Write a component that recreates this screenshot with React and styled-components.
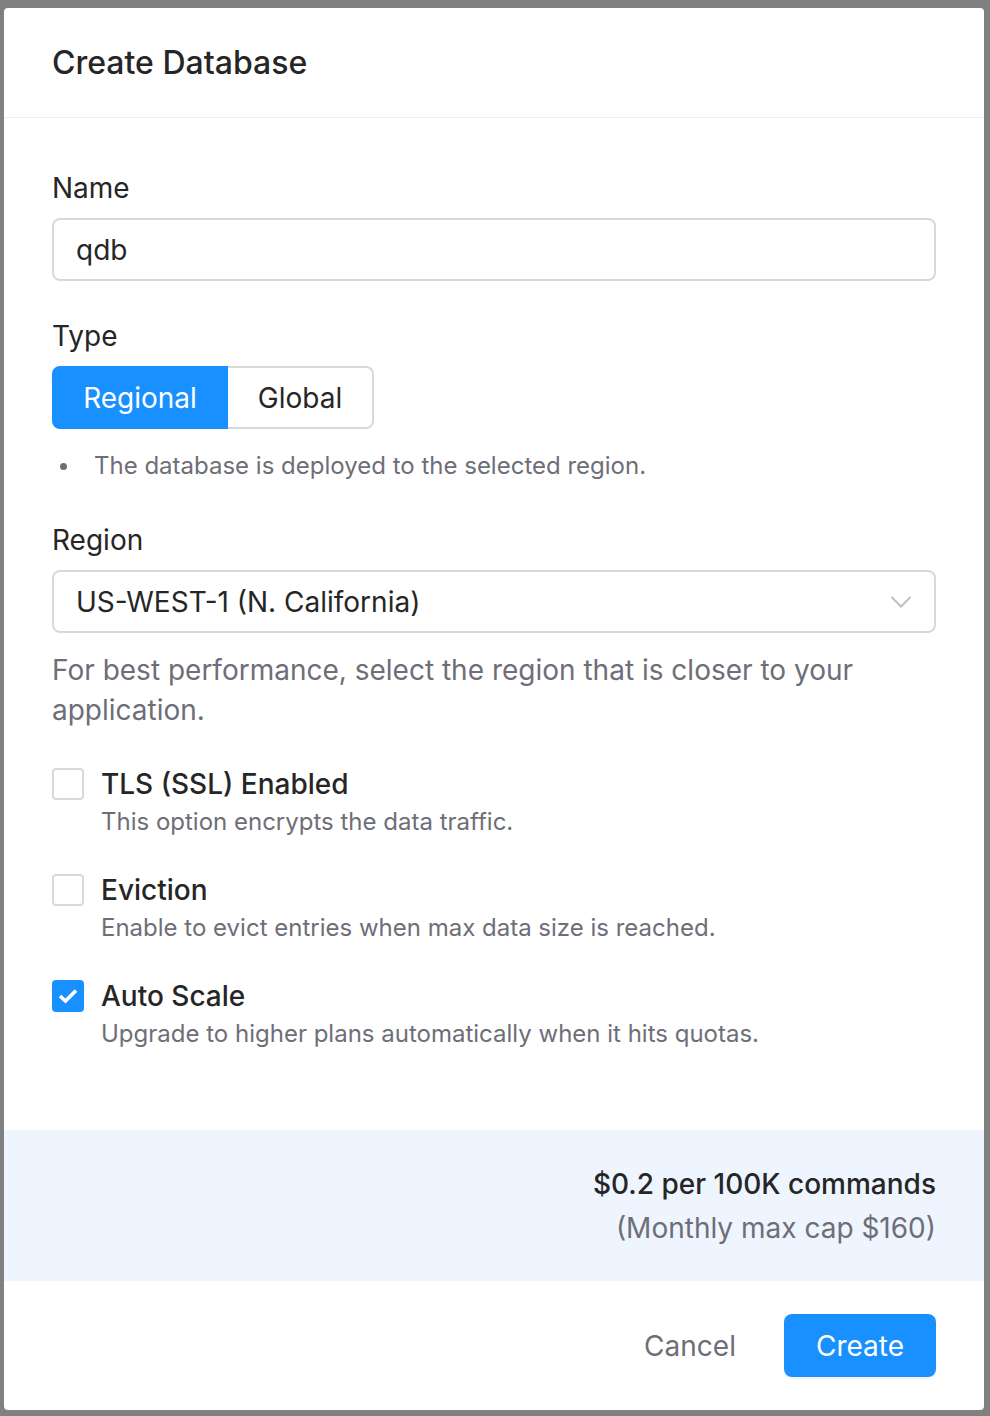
import React from "react";
import styled, {createGlobalStyle} from 'styled-components'

const GlobalStyle = createGlobalStyle`
  body {
    margin: 0;
    font-family: Inter, "Noto Sans", sans-serif;
  }
  * { box-sizing: border-box; }
`

const Overlay = styled.div`
  width: 990px;
  height: 1416px;
  background: #808080;
  padding: 8px 6px 0 4px;
  overflow: hidden;
`

const Modal = styled.div`
  width: 980px;
  background: #fff;
  border-radius: 4px;
  overflow: hidden;
  display: flex;
  flex-direction: column;
`

const Header = styled.div`
  padding: 33px 48px 32px;
  border-bottom: 1px solid #f0f0f0;
`

const Title = styled.div`
  font-size: 32px;
  line-height: 44px;
  font-weight: 500;
  color: #262626;
`

const Body = styled.div`
  padding: 48px 48px 80px;
  display: flex;
  flex-direction: column;
`

const Label = styled.div`
  font-size: 28px;
  line-height: 44px;
  color: #262626;
  margin-top: ${p => p.$top || 0}px;
  margin-bottom: 8px;
`

const Field = styled.div`
  height: 63px;
  border: 2px solid #d9d9d9;
  border-radius: 8px;
  padding: 0 22px;
  display: flex;
  align-items: center;
  justify-content: space-between;
  font-size: 28px;
  color: #262626;
`

const Segmented = styled.div`
  display: flex;
  align-self: flex-start;
`

const Segment = styled.div`
  width: ${p => p.$width}px;
  height: 63px;
  display: flex;
  align-items: center;
  justify-content: center;
  font-size: 28px;
  color: ${p => p.$active ? '#fff' : '#262626'};
  background: ${p => p.$active ? '#1890ff' : '#fff'};
  border: 2px solid ${p => p.$active ? '#1890ff' : '#d9d9d9'};
  border-left-width: ${p => p.$active ? 2 : 0}px;
  border-radius: ${p => p.$active ? '8px 0 0 8px' : '0 8px 8px 0'};
`

const HintRow = styled.div`
  display: flex;
  align-items: center;
  margin-top: 17px;
  font-size: 24px;
  line-height: 40px;
  color: #6e6e78;
`

const Dot = styled.span`
  width: 7px;
  height: 7px;
  border-radius: 50%;
  background: #6e6e78;
  margin: 0 27px 0 8px;
`

const Help = styled.div`
  margin-top: 17px;
  font-size: 28px;
  line-height: 40px;
  color: #6e6e78;
`

const Option = styled.div`
  display: grid;
  grid-template-columns: 32px 1fr;
  column-gap: 17px;
  margin-top: ${p => p.$top}px;
`

const Box = styled.div`
  width: 32px;
  height: 32px;
  margin-top: 6px;
  border-radius: 4px;
  border: 2px solid ${p => p.$checked ? '#1890ff' : '#d9d9d9'};
  background: ${p => p.$checked ? '#1890ff' : '#fff'};
  display: flex;
  align-items: center;
  justify-content: center;
`

const OptionTitle = styled.div`
  font-size: 28px;
  line-height: 44px;
  font-weight: 500;
  color: #262626;
`

const OptionDesc = styled.div`
  grid-column: 2;
  font-size: 24px;
  line-height: 32px;
  color: #6e6e78;
`

const Price = styled.div`
  background: #eef5ff;
  padding: 32px 48px 31px;
  text-align: right;
  font-size: 28px;
  line-height: 44px;
`

const PriceMain = styled.div`
  color: #262626;
  font-weight: 500;
`

const PriceSub = styled.div`
  color: #6e6e78;
`

const Footer = styled.div`
  padding: 33px 48px;
  display: flex;
  justify-content: flex-end;
  gap: 16px;
`

const Button = styled.button`
  height: 63px;
  min-width: ${p => p.$primary ? 152 : 0}px;
  padding: 0 32px;
  border: none;
  border-radius: 8px;
  font-family: inherit;
  font-size: 28px;
  color: ${p => p.$primary ? '#fff' : '#6e6e78'};
  background: ${p => p.$primary ? '#1890ff' : 'transparent'};
  box-shadow: ${p => p.$primary ? '0 2px 0 rgba(0,0,0,0.045)' : 'none'};
`

const Chevron = () => (
    <svg width="22" height="14" viewBox="0 0 22 14">
        <path d="M1.5 2 L11 11.5 L20.5 2" fill="none" stroke="#bfbfbf" strokeWidth="2"/>
    </svg>
)

const Check = () => (
    <svg width="22" height="18" viewBox="0 0 22 18">
        <path d="M3 9 L8.5 14 L19 3.5" fill="none" stroke="#fff" strokeWidth="3.6"/>
    </svg>
)

const options = [
    {title: 'TLS (SSL) Enabled', desc: 'This option encrypts the data traffic.', checked: false, top: 32},
    {title: 'Eviction', desc: 'Enable to evict entries when max data size is reached.', checked: false, top: 30},
    {title: 'Auto Scale', desc: 'Upgrade to higher plans automatically when it hits quotas.', checked: true, top: 30},
]

const App = () => {

    return (
        <Overlay>
            <GlobalStyle/>
            <Modal>
                <Header>
                    <Title>Create Database</Title>
                </Header>

                <Body>
                    <Label>Name</Label>
                    <Field>qdb</Field>

                    <Label $top={33}>Type</Label>
                    <Segmented>
                        <Segment $active $width={176}>Regional</Segment>
                        <Segment $width={146}>Global</Segment>
                    </Segmented>
                    <HintRow>
                        <Dot/>
                        The database is deployed to the selected region.
                    </HintRow>

                    <Label $top={32}>Region</Label>
                    <Field>
                        US-WEST-1 (N. California)
                        <Chevron/>
                    </Field>
                    <Help>
                        For best performance, select the region that is closer to your application.
                    </Help>

                    {options.map(o => (
                        <Option key={o.title} $top={o.top}>
                            <Box $checked={o.checked}>{o.checked && <Check/>}</Box>
                            <OptionTitle>{o.title}</OptionTitle>
                            <OptionDesc>{o.desc}</OptionDesc>
                        </Option>
                    ))}
                </Body>

                <Price>
                    <PriceMain>$0.2 per 100K commands</PriceMain>
                    <PriceSub>(Monthly max cap $160)</PriceSub>
                </Price>

                <Footer>
                    <Button>Cancel</Button>
                    <Button $primary>Create</Button>
                </Footer>
            </Modal>
        </Overlay>
    )
}

export default App;
